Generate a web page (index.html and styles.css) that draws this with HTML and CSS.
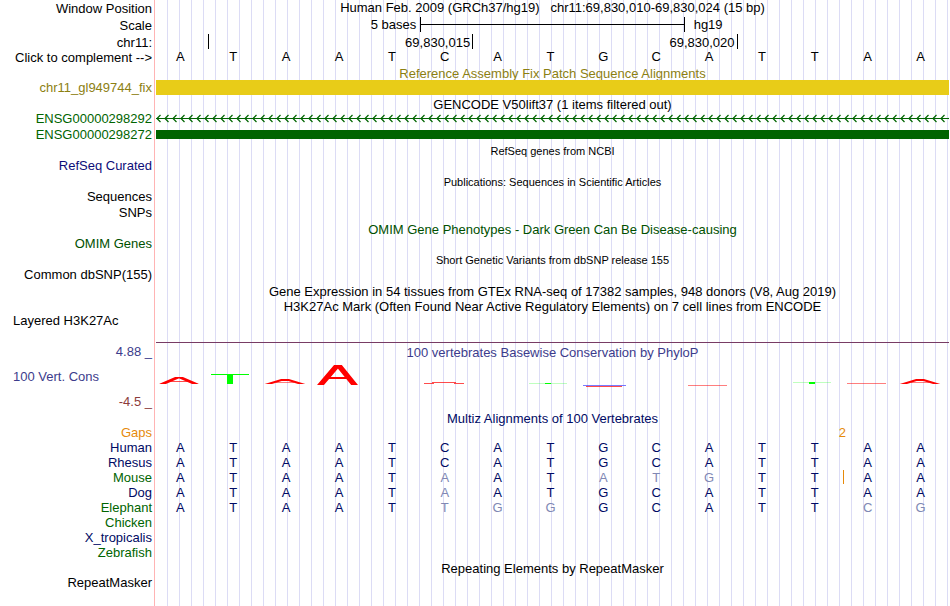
FILE: index.html
```html
<!DOCTYPE html>
<html lang="en">
<head>
<meta charset="utf-8">
<title>Genome tracks hg19 chr11:69,830,010-69,830,024</title>
<link rel="stylesheet" href="styles.css">
</head>
<body>
<main class="browser">
  <header class="ruler">
    <div class="row gap-2"><div class="label">Window Position</div><h1 class="title">Human Feb. 2009 (GRCh37/hg19) &nbsp; chr11:69,830,010-69,830,024 (15 bp)</h1></div>
    <div class="row gap-2"><div class="label">Scale</div><div class="lane scale"><span class="scale-size">5 bases</span><span class="scale-bar"></span><span class="scale-db">hg19</span></div></div>
    <div class="row"><div class="label">chr11:</div><div class="lane ticks"><span></span><span>69,830,015</span><span>69,830,020</span></div></div>
    <div class="row gap-2"><div class="label">Click to complement --&gt;</div><div class="lane bases"><span>A</span><span>T</span><span>A</span><span>A</span><span>T</span><span>C</span><span>A</span><span>T</span><span>G</span><span>C</span><span>A</span><span>T</span><span>T</span><span>A</span><span>A</span></div></div>
  </header>

  <section class="olive">
    <h2 class="title">Reference Assembly Fix Patch Sequence Alignments</h2>
    <div class="row gap-2"><div class="label">chr11_gl949744_fix</div><div class="lane"><div class="bar patch"></div></div></div>
  </section>

  <section>
    <h2 class="title">GENCODE V50lift37 (1 items filtered out)</h2>
    <div class="row gap-1 gene"><div class="label">ENSG00000298292</div><div class="lane">
      <svg class="intron" width="100%" height="15" aria-hidden="true">
        <defs><pattern id="arrow" width="8" height="15" patternUnits="userSpaceOnUse"><path d="M0 7.5H8M4.5 4L1 7.500L4.500 11" fill="none" stroke="#006400" stroke-width="1.200"/></pattern></defs>
        <rect width="100%" height="15" fill="url(#arrow)"/>
      </svg></div></div>
    <div class="row gap-1 gene"><div class="label">ENSG00000298272</div><div class="lane"><div class="bar exon"></div></div></div>
  </section>

  <section>
    <h2 class="title small">RefSeq genes from NCBI</h2>
    <div class="row gap-1 navy"><div class="label">RefSeq Curated</div></div>
  </section>

  <section>
    <h2 class="title small">Publications: Sequences in Scientific Articles</h2>
    <div class="row gap-1"><div class="label">Sequences</div></div>
    <div class="row gap-2"><div class="label">SNPs</div></div>
  </section>

  <section class="omim">
    <h2 class="title">OMIM Gene Phenotypes - Dark Green Can Be Disease-causing</h2>
    <div class="row gap-1"><div class="label">OMIM Genes</div></div>
  </section>

  <section>
    <h2 class="title small">Short Genetic Variants from dbSNP release 155</h2>
    <div class="row gap-2"><div class="label">Common dbSNP(155)</div></div>
  </section>

  <section>
    <h2 class="title tall">Gene Expression in 54 tissues from GTEx RNA-seq of 17382 samples, 948 donors (V8, Aug 2019)</h2>
  </section>

  <section class="histone">
    <h2 class="title">H3K27Ac Mark (Often Found Near Active Regulatory Elements) on 7 cell lines from ENCODE</h2>
    <div class="row"><div class="label start">Layered H3K27Ac</div></div>
  </section>

  <section class="row conservation">
    <div class="label scale-labels"><span>4.88 _</span><span class="name">100 Vert. Cons</span><span class="low">-4.5 _</span></div>
    <div class="lane">
      <h2 class="title tall">100 vertebrates Basewise Conservation by PhyloP</h2>
      <svg class="logo" viewBox="0 0 793 30" preserveAspectRatio="none" role="img" aria-label="Conservation score per base">
        <defs>
          <clipPath id="high"><rect x="150" y="5" width="60" height="20"/></clipPath>
          <clipPath id="mid"><rect y="17" width="60" height="7"/></clipPath>
          <clipPath id="low"><rect y="19" width="793" height="5"/></clipPath>
        </defs>
        <g fill="none" stroke="#f00">
          <g clip-path="url(#mid)"><path d="M4 25L25 16M42 25L21 16" stroke-width="2.800"/><path d="M14 21.500H32" opacity=".7"/></g>
          <g clip-path="url(#low)">
            <path d="M109 25L132 18M149 25L126 18M744 25L767 18M784 25L761 18" stroke-width="2.100"/>
            <path d="M120 22.500H138M755 22.500H773" opacity=".5"/>
          </g>
          <g clip-path="url(#high)"><path d="M162.800 27L183.200 3M200.200 27L180.800 3" stroke-width="5.300"/><path d="M171 18H192" stroke-width="2"/></g>
        </g>
        <g fill="#0f0">
          <path d="M55 14H93V15H55ZM71 15H77V24H71Z"/>
          <path d="M389 23H395V24H389ZM653 22H659V24H653Z"/>
          <path d="M373 23H411V24H373ZM637 22H675V23H637Z" opacity=".25"/>
        </g>
        <path d="M268 23.500H278M276 22.500H300M298 23.500H308M430 26.500H466" fill="none" stroke="#f00" opacity=".7"/>
        <path d="M532 25.500H571M691 23.500H730" stroke="#f00" opacity=".5"/>
        <path d="M427 25.500H470" stroke="#44f" opacity=".7"/>
      </svg>
    </div>
  </section>

  <section class="multiz">
    <h2 class="title">Multiz Alignments of 100 Vertebrates</h2>
    <table>
      <tbody>
        <tr class="gaps"><th class="label" scope="row">Gaps</th><td class="gap-count">2</td></tr>
        <tr><th class="label" scope="row">Human</th><td>A</td><td>T</td><td>A</td><td>A</td><td>T</td><td>C</td><td>A</td><td>T</td><td>G</td><td>C</td><td>A</td><td>T</td><td>T</td><td>A</td><td>A</td></tr>
        <tr><th class="label" scope="row">Rhesus</th><td>A</td><td>T</td><td>A</td><td>A</td><td>T</td><td>C</td><td>A</td><td>T</td><td>G</td><td>C</td><td>A</td><td>T</td><td>T</td><td>A</td><td>A</td></tr>
        <tr><th class="label alt" scope="row">Mouse</th><td>A</td><td>T</td><td>A</td><td>A</td><td>T</td><td class="diff">A</td><td>A</td><td>T</td><td class="diff">A</td><td class="diff">T</td><td class="diff">G</td><td>T</td><td>T</td><td class="insert">A</td><td>A</td></tr>
        <tr><th class="label" scope="row">Dog</th><td>A</td><td>T</td><td>A</td><td>A</td><td>T</td><td class="diff">A</td><td>A</td><td>T</td><td>G</td><td>C</td><td>A</td><td>T</td><td>T</td><td>A</td><td>A</td></tr>
        <tr><th class="label alt" scope="row">Elephant</th><td>A</td><td>T</td><td>A</td><td>A</td><td>T</td><td class="diff">T</td><td class="diff">G</td><td class="diff">G</td><td>G</td><td>C</td><td>A</td><td>T</td><td>T</td><td class="diff">C</td><td class="diff">G</td></tr>
        <tr><th class="label alt" scope="row">Chicken</th></tr>
        <tr><th class="label" scope="row">X_tropicalis</th></tr>
        <tr><th class="label alt" scope="row">Zebrafish</th></tr>
      </tbody>
    </table>
  </section>

  <section class="repeats">
    <h2 class="title">Repeating Elements by RepeatMasker</h2>
    <div class="row"><div class="label">RepeatMasker</div></div>
  </section>
</main>
</body>
</html>
```
FILE: styles.css
```css
* { box-sizing: border-box; }

body {
  margin: 0;
  background: #fff;
  color: #000;
  font: 13px/15px "Liberation Sans", Arial, sans-serif;
}

/* The guide lines run behind every track, right of the label column. */
.browser {
  min-height: 100vh;
  padding-right: 1px;
  background:
    linear-gradient(#ffb4b4, #ffb4b4) 154px 0 / 1px 100% no-repeat,
    repeating-linear-gradient(90deg, transparent 0 11px, #dcdcf5 11px 12px) 156px 0 no-repeat;
}

.row {
  display: grid;
  grid-template-columns: 152px minmax(0, 1fr);
  column-gap: 4px;
}
.gap-1 { padding-bottom: 1px; }
.gap-2 { padding-bottom: 2px; }

.label {
  height: 15px;
  padding-left: 13px;
  text-align: right;
  white-space: nowrap;
  font-weight: normal;
}
.label.start { text-align: left; }

.title {
  height: 14px;
  margin: 0 0 0 156px;
  font-size: 13px;
  font-weight: normal;
  text-align: center;
  white-space: nowrap;
}
.title.small { height: 15px; padding-top: 1px; font-size: 11px; }
.title.tall { height: 15px; }
.row .title { margin-left: 0; }

/* Ruler */
.ruler .label { padding-top: 1px; }

.scale { display: grid; grid-template-columns: repeat(3, minmax(0, 1fr)); }
.scale-size { padding-right: 4px; text-align: right; }
.scale-db { padding-left: 9px; }
.scale-bar {
  border: solid #000;
  border-width: 0 1px;
  background: linear-gradient(#000, #000) 0 7px / 100% 1px no-repeat;
}

.ticks {
  display: grid;
  grid-template-columns: 1fr 5fr 5fr 4fr;
  text-align: right;
}
.ticks span {
  height: 15px;
  padding: 1px 2px 0 0;
  border-right: 1px solid #000;
}

.bases { display: grid; grid-template-columns: repeat(15, minmax(0, 1fr)); }
.bases span { padding-right: 4px; text-align: center; }

/* Items */
.bar { position: relative; }
.patch { height: 15px; background: #e8cc18; }
.exon { height: 9px; margin-top: 3px; background: #006400; }
.intron { display: block; }

.olive { color: #8c8012; }
.gene { color: #006400; }
.navy { color: #0c0c78; }
.omim { color: #005000; }

.histone { padding-bottom: 14px; }

/* Conservation */
.conservation { color: #3c3c8c; }
.conservation .lane {
  padding-top: 2px;
  border-top: 1px solid #783c64;
}
.scale-labels {
  display: flex;
  flex-direction: column;
  gap: 10px;
  height: 69px;
  padding-top: 2px;
}
.scale-labels .name { text-align: left; }
.scale-labels .low { color: #8c3c3c; }
.logo { display: block; width: 100%; height: 30px; }

/* Alignment */
.multiz { color: #000a64; }
.multiz table, .multiz tbody { display: block; }
.multiz tr {
  display: grid;
  grid-template-columns: 156px repeat(15, minmax(0, 1fr));
}
.multiz th { padding: 0 4px 0 0; }
.multiz td { padding: 0 4px 0 0; text-align: center; }
.multiz .alt { color: #006400; }
.multiz .diff { color: #8088b4; }
.multiz .gaps { color: #e68a0a; }
.multiz .gap-count { grid-column: 14 / 16; padding-right: 2px; }
.multiz .insert { background: linear-gradient(#e68a0a, #e68a0a) 0 0 / 1px 14px no-repeat; }

.repeats { padding-top: 1px; }
```
